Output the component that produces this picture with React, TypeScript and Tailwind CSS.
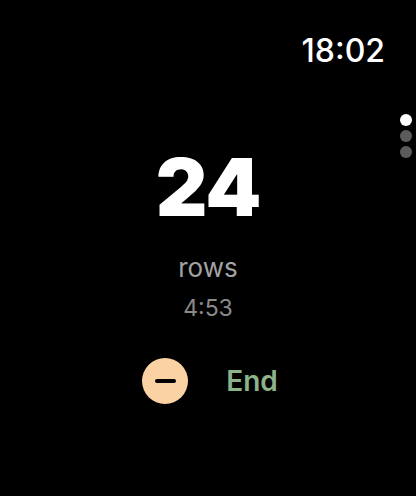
import React from "react";

export default function App() {
  return (
    <div
      className="relative flex h-[496px] w-[416px] flex-col bg-black text-white"
      style={{ fontFamily: "Inter, 'Noto Sans', sans-serif" }}
    >
      <div className="flex justify-end pr-[31px] pt-[31px]">
        <span className="text-[32px] leading-[40px] font-medium">18:02</span>
      </div>

      {/* page indicator */}
      <div className="absolute right-[4px] top-[114px] flex flex-col gap-[4px]">
        <div className="h-[12px] w-[12px] rounded-full bg-white" />
        <div className="h-[12px] w-[12px] rounded-full bg-[#5c5c5c]" />
        <div className="h-[12px] w-[12px] rounded-full bg-[#5c5c5c]" />
      </div>

      <div className="flex flex-col items-center pt-[76px]">
        <span className="text-[80px] leading-[80px] font-black tracking-[-1px]">24</span>
        <span className="mt-[26px] text-[26px] leading-[30px] text-[#a3a3a3]">rows</span>
        <span className="mt-[11px] text-[23px] leading-[28px] text-[#8a8a8a]">4:53</span>

        <div className="mt-[36px] flex items-center gap-[38px] pl-[4px]">
          <button className="flex h-[46px] w-[46px] items-center justify-center rounded-full bg-[#fbd2a4]">
            <span className="h-[4px] w-[21px] rounded-full bg-black" />
          </button>
          <span className="text-[28px] leading-[32px] font-semibold text-[#8db38a]">End</span>
        </div>
      </div>
    </div>
  );
}
